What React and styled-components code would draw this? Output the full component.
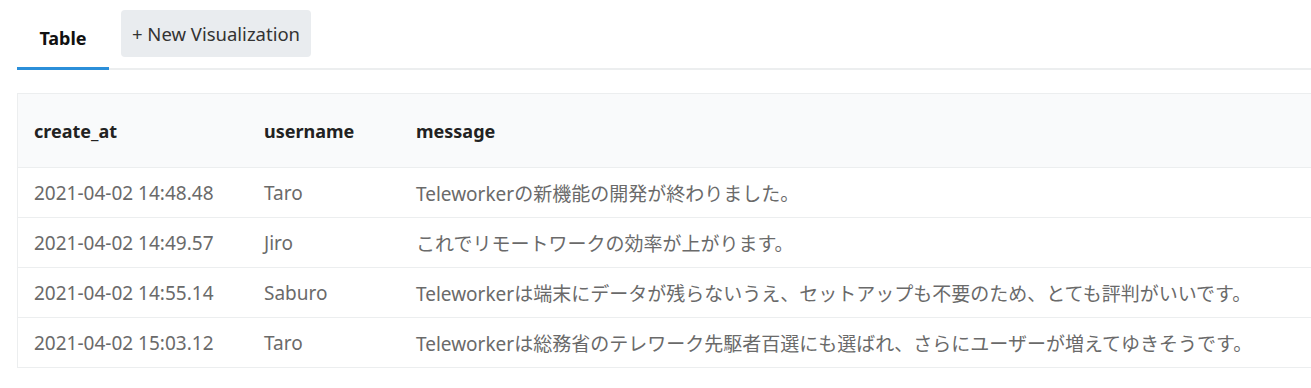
import React from "react";
import styled, { createGlobalStyle } from "styled-components";

const GlobalStyle = createGlobalStyle`
  body {
    margin: 0;
    background: #fff;
    font-family: "Noto Sans", "Noto Sans CJK JP", sans-serif;
    overflow: hidden;
  }
`;

// 페이지 전체
const Page = styled.div`
  padding: 10px 0 0 17px;
  width: 1320px;
`;

const TabBar = styled.div`
  display: flex;
  align-items: flex-end;
  border-bottom: 2px solid #eceeef;
  height: 58px;
`;

const Tab = styled.div`
  width: 92px;
  height: 100%;
  display: flex;
  align-items: center;
  justify-content: center;
  font-size: 18px;
  font-weight: 700;
  color: #111;
  border-bottom: 3px solid ${(p) => (p.active ? "#2b8fd9" : "transparent")};
  margin-bottom: -2px;
  box-sizing: border-box;
  padding-bottom: 3px;
`;

const NewButton = styled.button`
  align-self: flex-start;
  margin-left: 12px;
  height: 47px;
  width: 190px;
  background: #e9ecef;
  border: none;
  border-radius: 4px;
  font-family: inherit;
  font-size: 18.5px;
  color: #333;
  padding: 0;
`;

const Table = styled.table`
  margin-top: 23px;
  width: 1310px;
  border-collapse: collapse;
  border: 1px solid #eceeef;
`;

const HeadRow = styled.tr`
  background: #f9fafb;
  height: 74px;
`;

const Th = styled.th`
  text-align: left;
  font-size: 18px;
  font-weight: 700;
  color: #222;
  padding: 0 16px;
  width: ${(p) => p.w || "auto"};
`;

const Row = styled.tr`
  height: 50px;
  border-top: 1px solid #eceeef;
`;

const Td = styled.td`
  font-size: 19px;
  color: #6a6a6a;
  padding: 0 16px;
  white-space: nowrap;
`;

const rows = [
  { create_at: "2021-04-02 14:48.48", username: "Taro", message: "Teleworkerの新機能の開発が終わりました。" },
  { create_at: "2021-04-02 14:49.57", username: "Jiro", message: "これでリモートワークの効率が上がります。" },
  {
    create_at: "2021-04-02 14:55.14",
    username: "Saburo",
    message: "Teleworkerは端末にデータが残らないうえ、セットアップも不要のため、とても評判がいいです。",
  },
  {
    create_at: "2021-04-02 15:03.12",
    username: "Taro",
    message: "Teleworkerは総務省のテレワーク先駆者百選にも選ばれ、さらにユーザーが増えてゆきそうです。",
  },
];

function App() {
  return (
    <Page>
      <GlobalStyle />
      <TabBar>
        <Tab active>Table</Tab>
        <NewButton>+ New Visualization</NewButton>
      </TabBar>
      <Table>
        <thead>
          <HeadRow>
            <Th w="198px">create_at</Th>
            <Th w="120px">username</Th>
            <Th>message</Th>
          </HeadRow>
        </thead>
        <tbody>
          {rows.map((item, i) => (
            <Row key={i}>
              <Td>{item.create_at}</Td>
              <Td>{item.username}</Td>
              <Td>{item.message}</Td>
            </Row>
          ))}
        </tbody>
      </Table>
    </Page>
  );
}

export default App;
